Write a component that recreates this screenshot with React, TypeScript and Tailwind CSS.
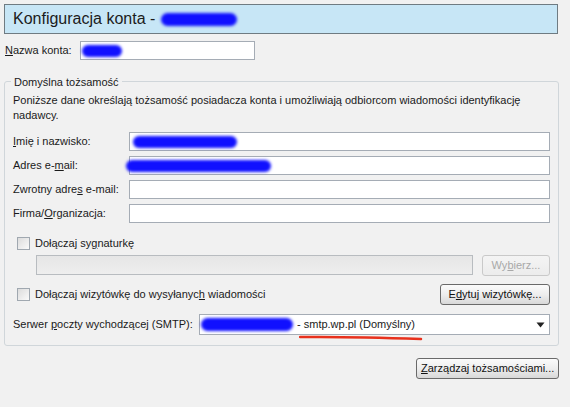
import React from 'react';

// Okno konfiguracji konta (Thunderbird, motyw XP) — odtworzenie zrzutu.

const font = { fontFamily: 'Tahoma, "Liberation Sans", Arial, sans-serif' };

function Blob({ w, h = 12, className = '' }: { w: number; h?: number; className?: string }) {
  return (
    <span
      className={`inline-block shrink-0 rounded-full bg-[#1010ff] blur-[1.5px] ${className}`}
      style={{ width: w, height: h }}
    />
  );
}

function Field({ label, children }: { label: [string, string, string]; children?: React.ReactNode }) {
  return (
    <div className="flex items-center h-[19px] mb-[5px]">
      <span className="w-[116px] shrink-0 whitespace-nowrap">
        {label[0]}
        <span className="underline underline-offset-1">{label[1]}</span>
        {label[2]}
      </span>
      <div className="flex-1 h-[19px] bg-white border border-[#a5acb5] flex items-center">{children}</div>
    </div>
  );
}

function Checkbox({ children }: { children: React.ReactNode }) {
  return (
    <div className="flex items-center gap-[5px] whitespace-nowrap">
      <span className="w-[13px] h-[13px] border border-[#a0a8b0] bg-gradient-to-br from-[#dcdcdc] to-[#fafafa]" />
      <span>{children}</span>
    </div>
  );
}

function Btn({ children, disabled = false, className = '' }: { children: React.ReactNode; disabled?: boolean; className?: string }) {
  return (
    <button
      className={`h-[21px] px-[4px] whitespace-nowrap rounded-[3px] border bg-gradient-to-b ${
        disabled
          ? 'border-[#c9c9c9] from-[#f4f4f4] to-[#ececec] text-[#a8a8a8]'
          : 'border-[#6a6a6a] from-[#fbfbfb] via-[#eeeeee] to-[#d8d8d8] text-[#111]'
      } ${className}`}
    >
      {children}
    </button>
  );
}

export default function App() {
  return (
    <div className="w-[570px] h-[407px] bg-[#f1f1f1] text-[11px] text-[#1a1a1a] overflow-hidden" style={font}>
      <div className="pt-[4px] pl-[4px] pr-[12px]">
        <div className="h-[30px] bg-[#c7e6f6] border border-[#6f7b82] flex items-center pl-[8px] gap-[6px]">
          <span className="text-[16px] text-[#1c1c1c]">Konfiguracja konta -</span>
          <Blob w={76} h={13} />
        </div>

        <div className="flex items-center mt-[7px] h-[19px]">
          <span className="w-[76px] pl-[1px] whitespace-nowrap">
            <span className="underline underline-offset-1">N</span>azwa konta:
          </span>
          <div className="w-[175px] h-[19px] bg-white border border-[#a5acb5] flex items-center">
            <Blob w={40} className="ml-[1px]" />
          </div>
        </div>

        <div className="relative mt-[21px] mr-[-1px] border border-[#d0d6da] rounded-[3px] px-[8px] pt-[11px] pb-[10px]">
          <span className="absolute left-[6px] top-[-8px] bg-[#f1f1f1] px-[3px]">Domyślna tożsamość</span>
          <p className="leading-[15px] mb-[9px]">
            Poniższe dane określają tożsamość posiadacza konta i umożliwiają odbiorcom wiadomości identyfikację nadawcy.
          </p>
          <div>
            <Field label={['', 'I', 'mię i nazwisko:']}>
              <Blob w={104} className="ml-[3px]" />
            </Field>
            <Field label={['Adres e-', 'm', 'ail:']}>
              <Blob w={145} className="ml-[-4px]" />
            </Field>
            <Field label={['Zwrotny adre', 's', ' e-mail:']} />
            <Field label={['Firma/', 'O', 'rganizacja:']} />
          </div>

          <div className="mt-[12px] pl-[4px]">
            <Checkbox>
              Dołączaj sy<span className="underline underline-offset-1">g</span>naturkę
            </Checkbox>
          </div>
          <div className="flex items-center mt-[3px] pl-[23px]">
            <div className="flex-1 h-[20px] border border-[#b8bcc0] bg-gradient-to-b from-[#e6e6e6] to-[#eeeeee]" />
            <Btn disabled className="ml-[9px] w-[68px]">
              Wy<span className="underline underline-offset-1">b</span>ierz...
            </Btn>
          </div>
          <div className="flex items-center justify-between mt-[8px] pl-[4px]">
            <Checkbox>
              Dołączaj wizytówkę do wysyłanyc<span className="underline underline-offset-1">h</span> wiadomości
            </Checkbox>
            <Btn className="w-[110px]">
              E<span className="underline underline-offset-1">d</span>ytuj wizytówkę...
            </Btn>
          </div>
          <div className="flex items-center mt-[9px]">
            <span className="w-[186px] shrink-0 whitespace-nowrap">
              Serwer <span className="underline underline-offset-1">p</span>oczty wychodzącej (SMTP):
            </span>
            <div className="relative flex-1 h-[21px] bg-white border border-[#a5acb5] flex items-center pl-[1px] whitespace-nowrap">
              <Blob w={92} h={13} />
              <span className="ml-[4px]">- smtp.wp.pl (Domyślny)</span>
              <svg className="absolute right-[4px] top-[7px]" width="9" height="6" viewBox="0 0 9 6">
                <path d="M0.5 0.5 H8.5 L4.5 5.5 Z" fill="#222" />
              </svg>
              <svg className="absolute left-[99px] top-[20px]" width="124" height="6" viewBox="0 0 124 6">
                <path d="M1 2 C40 1.5 80 2.5 122 4" stroke="#e8311d" strokeWidth="2.5" fill="none" strokeLinecap="round" />
              </svg>
            </div>
          </div>
        </div>

        <div className="flex justify-end mt-[12px] mr-[-1px]">
          <Btn className="w-[143px]">
            <span className="underline underline-offset-1">Z</span>arządzaj tożsamościami...
          </Btn>
        </div>
      </div>
    </div>
  );
}
